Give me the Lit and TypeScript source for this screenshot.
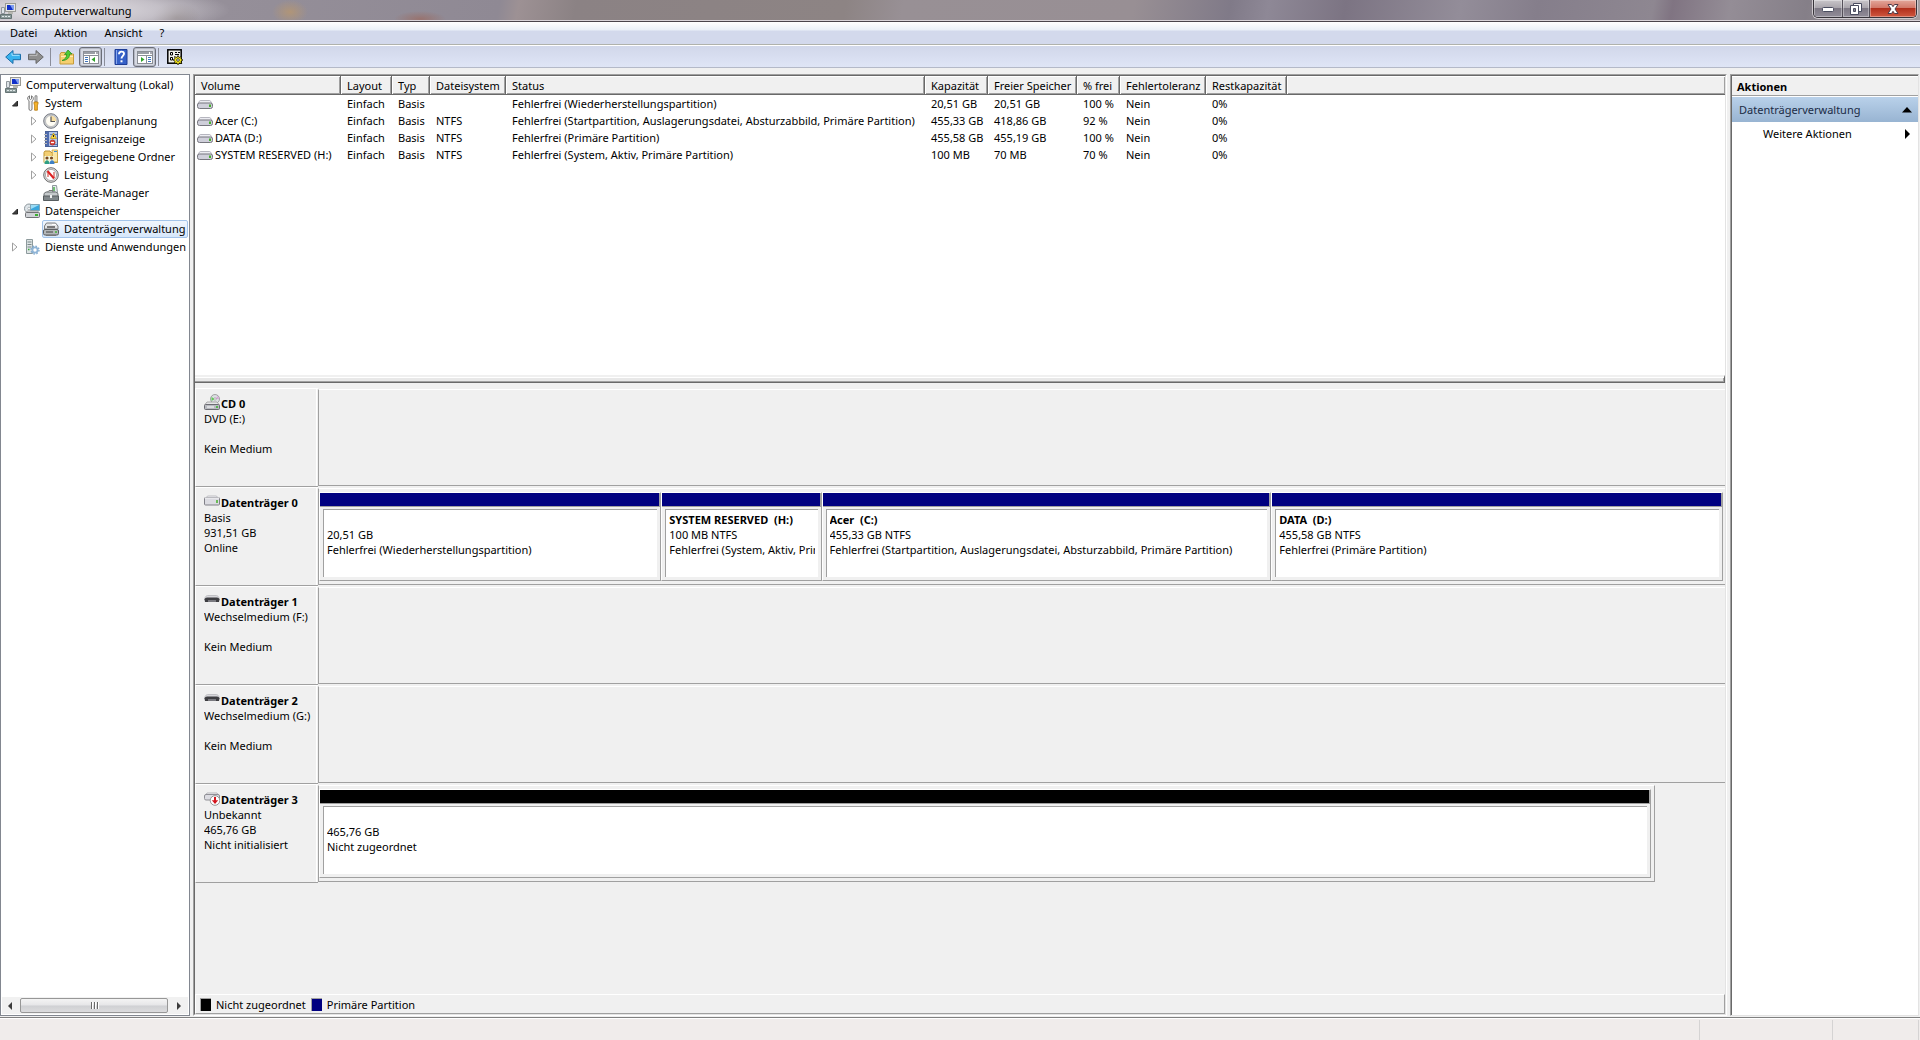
import { LitElement, html, css, svg, nothing } from "lit";
import type { TemplateResult } from "lit";
import { customElement } from "lit/decorators.js";
import { classMap } from "lit/directives/class-map.js";
import { styleMap } from "lit/directives/style-map.js";

const art: Record<string, TemplateResult> = {
  computer: svg`
    <rect x="5.500" y=".5" width="10" height="8" fill="#e8e8e4" stroke="#9a9a94"/>
    <rect x="7" y="2" width="7" height="5" fill="#1230c8"/><path d="M10 2h4v5h-1z" fill="#7f9cf0"/>
    <path d="M8 9h5v2H8z" fill="#b8b8b2"/><path d="M1.500 4.500h3v6h-3z" fill="#dfe4e8" stroke="#90979c"/>
    <path d="M.5 11.500h11v4H.5z" fill="#8c9a9a" stroke="#657474"/><path d="M2 13.500h2m1 0h2m1 0h2" stroke="#dfe8e8"/>`,
  system: svg`
    <path d="M5.500.8C3.500 1.500 3 4 4.500 5.300L5 6v8c0 2 3 2 3 0V6c2-1.300 1.800-4-.5-5.200v3L6.500 4.500l-1-.7z" fill="#f4f4f4" stroke="#777"/>
    <path d="M11 .8h2v6h-2z" fill="#ddd" stroke="#777" stroke-width=".8"/><path d="M10 7h4v2l-.6 1v5.200h-2.800V10L10 9z" fill="#f6b42c" stroke="#b87a10" stroke-width=".8"/>`,
  clock: svg`
    <circle cx="8" cy="8" r="7.300" fill="#c9ccd1" stroke="#777b82"/><circle cx="8" cy="8" r="5.500" fill="#fffdf4" stroke="#a8a8a8" stroke-width=".6"/>
    <path d="M8 8V2.700A5.300 5.300 0 0 1 13.300 8z" fill="#f6dda0"/><path d="M8 3.500V8.500h4" fill="none" stroke="#555" stroke-width="1.200"/>`,
  events: svg`
    <rect x="2.500" y=".5" width="12" height="15" fill="#b4c6e8" stroke="#4a6298"/><path d="M3 1h3v14H3z" fill="#4f6cae"/>
    <path d="M1 3.500h3M1 6.500h3M1 9.500h3M1 12.500h3" stroke="#bbb"/><path d="M7 3.500h7M7 13.500h7" stroke="#5b7ab8"/>
    <path d="M10.500 2l3 5.500h-6z" fill="#ffd83a" stroke="#b08a00" stroke-width=".6"/><path d="M10.500 4v2" stroke="#222"/>
    <circle cx="9.500" cy="11.500" r="2.500" fill="#e0564e" stroke="#b02018" stroke-width=".8"/><path d="M8 11.500h3" stroke="#fff"/>`,
  shared: svg`
    <path d="M1 3.500L2 2h5l1 1.500h6.500v10H1z" fill="#f3cf72" stroke="#bd9432"/><path d="M9 1h5.500v12H10z" fill="#fbe6a5" stroke="#c79f3e" stroke-width=".8"/>
    <path d="M11 2.500h3" stroke="#3b8fd8"/><path d="M1.500 7h9v7h-9z" fill="#f4f8dc"/>
    <circle cx="4" cy="9" r="1.600" fill="#7a4a22"/><circle cx="8.500" cy="9" r="1.600" fill="#7a4a22"/>
    <path d="M1.500 15c0-5 5-5 5 0z" fill="#2f9f83"/><path d="M6.500 15c0-5 5-5 5 0z" fill="#3e7fc4"/>`,
  gauge: svg`
    <circle cx="8" cy="8" r="7.300" fill="#e0e0e0" stroke="#6c6c6c"/><circle cx="8" cy="8" r="5.600" fill="#fff" stroke="#999" stroke-width=".8"/>
    <path d="M5 10V5l6 6V5" fill="none" stroke="#c8322a" stroke-width="1"/><path d="M4.500 4l6.500 7.500" stroke="#d22" stroke-width="2"/>`,
  devices: svg`
    <path d="M9.500.5h4l1 7h-5z" fill="#e6ecee" stroke="#8f989b"/><path d="M11 2v4" stroke="#49b04a" stroke-width="1.500"/>
    <path d="M4 7.500l2-2h4l2 2" fill="none" stroke="#777"/><path d="M1 8.500L3 7h10l2 1.500v3H1z" fill="#c5c9cb" stroke="#6d7275"/>
    <path d="M.5 11h15v4.500H.5z" fill="#80878a" stroke="#565c5e"/><path d="M7 10h2v3H7z" fill="#f0f0f0"/>`,
  storage: svg`
    <circle cx="5" cy="5.500" r="4.500" fill="#dfe6ea" stroke="#8d979d"/><circle cx="5" cy="5.500" r="1.300" fill="#fff" stroke="#8d979d" stroke-width=".6"/>
    <path d="M6.500 1.500h9v6h-9z" fill="#3aa6dc" stroke="#7fa6b8"/><path d="M7 2h8L7 6z" fill="#9adcf6"/>
    <path d="M2 9.500L3.500 8h10L15 9.500" fill="#e8e8ea" stroke="#999"/><rect x="1.500" y="9.500" width="14" height="5" rx="1" fill="#d0d2d6" stroke="#707276"/><path d="M11 12h3" stroke="#3bb030" stroke-width="2"/>`,
  diskmgmt: svg`
    <path d="M1.500 5l2-3h9l2.500 3v3h-13.500z" fill="#e2e4e6" stroke="#7c7e80"/><path d="M4 6h8" stroke="#555" stroke-width="1.500"/><path d="M9 3.500h4" stroke="#fff"/>
    <rect x=".5" y="8.500" width="15" height="5.500" rx="1.500" fill="#b4b7b9" stroke="#5c5f62"/><path d="M3 11h7" stroke="#444"/><path d="M12 11h2" stroke="#3fb33a" stroke-width="1.600"/><path d="M3 14.500h10" stroke="#777"/>`,
  services: svg`
    <path d="M2.500.5h6v14h-6z" fill="#dde3e4" stroke="#8d9a9c"/><path d="M3.500 3h4m-4 2.500h4m-4 2.500h4" stroke="#7b898b"/><path d="M4 10.500h1.500" stroke="#39a838" stroke-width="1.500"/>
    <circle cx="11" cy="11" r="2.600" fill="#fff" stroke="#8fb4d6" stroke-width="1.800"/><circle cx="11" cy="11" r="4" fill="none" stroke="#7fa9cf" stroke-width="1.300" stroke-dasharray="1.600 1.540"/>`,
  back: svg`<path d="M8 1.500v3.800h7.500v5.400H8v3.800L.7 8z" fill="#38b2ee" stroke="#1b6da8"/><path d="M7 4v2.300h7.500" fill="none" stroke="#a6e4ff"/>`,
  forward: svg`<path d="M8 1.500v3.800H.5v5.400H8v3.800L15.300 8z" fill="#8f8f8f" stroke="#686868"/><path d="M1.500 6.300H9V4" fill="none" stroke="#c2c2c2"/>`,
  folderup: svg`
    <path d="M1 5.500l1-2h4l1 1.500h7.500v10H1z" fill="#f5cf70" stroke="#c59b3c"/><path d="M2 7.500h12" stroke="#fdebb4"/>
    <path d="M3 11.500c3-1 4.500-3 4.700-6H5.500L9 1l4 4h-2.300c0 4-3 6.500-7.700 6.500z" fill="#4ecb35" stroke="#238a1a" stroke-width=".7"/>`,
  paneleft: svg`
    <rect x=".5" y="2.500" width="15" height="12" fill="#fff" stroke="#8b8f96"/><path d="M1 4h11" stroke="#9a9ea6" stroke-width="2"/><path d="M13 4h2" stroke="#556"/><path d="M1 6.500h14M6.500 7v7" stroke="#8b8f96"/>
    <path d="M2 8.500h3m-3 2h3m-3 2h3" stroke="#3d74bd"/><path d="M12 8v5l-3.500-2.500z" fill="#2fa32a"/>`,
  paneright: svg`
    <rect x=".5" y="2.500" width="15" height="12" fill="#fff" stroke="#8b8f96"/><path d="M1 4h11" stroke="#9a9ea6" stroke-width="2"/><path d="M13 4h2" stroke="#556"/><path d="M1 6.500h14M9.500 7v7" stroke="#8b8f96"/>
    <path d="M11 8.500h3m-3 2h3m-3 2h3" stroke="#3d74bd"/><path d="M4 8v5l3.500-2.500z" fill="#2fa32a"/>`,
  help: svg`
    <path d="M2 .5h12v15H2z" fill="#3560c8" stroke="#1e3d96"/><path d="M3.500 1v14" stroke="#88a6ec"/>
    <path d="M6 5.200c0-3.400 5-3.400 5-.4 0 2-2.500 2.200-2.500 4.700" fill="none" stroke="#fff" stroke-width="1.900"/><path d="M7.500 11.300h2v2h-2z" fill="#fff"/>`,
  settings: svg`
    <rect x=".8" y=".8" width="13.400" height="13.400" fill="#f0f0ec" stroke="#000" stroke-width="1.500"/>
    <path d="M3.500 3.500h2v2.500h-2zM3.500 8.500h2v2.500h-2z" fill="#fff" stroke="#000"/><path d="M8 3.500h2m1 0h2M8 5.500h4" stroke="#000"/>
    <path d="M11 6.500l1 2 2.500-1-.5 2.300 2 1.200-2 1.200.8 2.300-2.500-.6-1.300 2-1.300-2-2.500.6.800-2.300-2-1.200 2-1.200L7.500 7.500l2.500 1z" fill="#f2e41c" stroke="#000" stroke-width=".7"/><circle cx="11" cy="11" r="1.300" fill="#fff" stroke="#000" stroke-width=".7"/>`,
  volume: svg`
    <path d="M.6 8.500L2.500 5c.2-.4.5-.5 1-.5h9c.5 0 .8.100 1 .5l1.900 3.500z" fill="#ececf2" stroke="#a6a6b0" stroke-width=".8"/>
    <rect x=".5" y="7" width="15" height="5.500" rx="2" fill="#cfcfda" stroke="#77777f"/><path d="M12 8.500h2v2.500h-2z" fill="#46b02a"/>`,
  disk: svg`
    <path d="M2 5l1.500-2h9L14 5" fill="#f4f4f6" stroke="#b0b0b6" stroke-width=".8"/>
    <rect x=".5" y="4.500" width="15" height="7.500" rx="1" fill="#dcdce2" stroke="#808088"/><path d="M1 5h14" stroke="#f4f4f6"/><path d="M13 7v3" stroke="#46b02a" stroke-width="1.500"/>`,
  cdrom: svg`
    <circle cx="11" cy="5" r="4.500" fill="#dcdfe2" stroke="#909090" stroke-width=".8"/><path d="M11 5L7.500 3v4z" fill="#5fcf55"/><path d="M11 5l3-3 1 3z" fill="#d8a8d8"/><circle cx="11" cy="5" r="1.200" fill="#fff" stroke="#888" stroke-width=".6"/>
    <path d="M1 10.500L3 8h10l2 2.500" fill="#e6e6e8" stroke="#999" stroke-width=".8"/><rect x=".5" y="10.500" width="15" height="5" rx="1" fill="#b8bac0" stroke="#6c6c72"/><path d="M3 13h7" stroke="#fff"/><path d="M12 13h2" stroke="#35b02a" stroke-width="1.600"/>`,
  removable: svg`
    <path d="M.5 7.500C1 4 3 3.500 4 3.500h8c1 0 3 .5 3.500 4z" fill="#d8d8dc" stroke="#b0b0b4" stroke-width=".7"/>
    <path d="M.5 7.500C1 5.500 3 5.500 4 5.500h8c1 0 3 0 3.500 2L15 10H1z" fill="#3e3e42"/><path d="M4 9h8" stroke="#8a8a90" stroke-width="1.600"/>`,
  offline: svg`
    <path d="M1 6l2-3h10l2 3" fill="#f4f4f6" stroke="#a6a6ac" stroke-width=".8"/><rect x=".5" y="4.500" width="15" height="5.500" rx="1.500" fill="#dcdce2" stroke="#909096"/>
    <circle cx="11" cy="10.500" r="4.800" fill="#fff" stroke="#8a8a8a" stroke-width=".9"/><path d="M11 7V12" stroke="#d4141c" stroke-width="2"/><path d="M7.800 10.200h6.400L11 14z" fill="#d4141c"/>`,
};

const icon = (name: string) =>
  html`<svg class="icon" viewBox="0 0 16 16" width="16" height="16" aria-hidden="true">${art[name]}</svg>`;

const base = css`
  * { box-sizing: border-box; }
  button {
    font: inherit; color: inherit; background: none; border: 0; margin: 0; padding: 0;
    text-align: left; cursor: default;
  }
  .icon { display: block; flex: none; }
`;

@customElement("window-frame-bars")
class WindowFrameBars extends LitElement {
  static styles = [base, css`
    :host { display: block; }
    .title {
      display: flex; height: 22px; border-bottom: 1px solid #4a454c;
      background:
        linear-gradient(to bottom, transparent 20px, #d8d3d8 20px),
        radial-gradient(ellipse 170px 26px at 60px 10px, rgba(240,238,242,.95), rgba(225,222,228,.6) 60%, transparent),
        radial-gradient(ellipse 24px 14px at 176px 17px, #7d7476, transparent),
        radial-gradient(ellipse 18px 12px at 290px 12px, #b09578, transparent),
        radial-gradient(ellipse 26px 8px at 420px 19px, #98736f, transparent),
        linear-gradient(100deg, #9a949d 0, #8f8994 26%, #9d9194 27%, #8b8284 30%, #8d8484 44%, #989095 47%, #988f94 59%, #807a88 64%, #8e8896 66%, #7c7483 70%, #938d99 76%, #857e8b 80%, #8e8791 86%, #807482 87%, #948d96 90%, #857f88 94%, #a59fa2 100%);
    }
    .caption { display: flex; align-items: center; gap: 5px; height: 20px; flex: 1; padding-top: 1px; }
    h1 { font-size: inherit; font-weight: 400; margin: 0; }
    .controls {
      display: flex; height: 18px; margin-right: 3px; border: 1px solid #37343a; border-top: 0;
      border-radius: 0 0 5px 5px; box-shadow: 0 0 0 1px #cfcacf; overflow: hidden;
    }
    .ctl {
      width: 27px; display: grid; place-items: center; border-right: 1px solid #55505a;
      background: linear-gradient(#c9c6ca 0, #aaa6ad 45%, #7d7884 50%, #918c98 100%);
      box-shadow: inset 0 0 0 1px rgba(255,255,255,.35);
    }
    .ctl.first { width: 29px; }
    .ctl.close { width: 46px; border-right: 0; background: linear-gradient(#e3a79b 0, #d2796a 45%, #b12f1c 50%, #d0573f 100%); }
    .menu {
      display: flex; gap: 1px; height: 23px; padding: 0 2px 1px; border-bottom: 1px solid #b0b2ac;
      background: linear-gradient(#fff 0, #eaf0f8 8px, #d3d9ec 9px, #d3d9ec 100%);
    }
    .menu button { padding: 0 8px; }
    .tools {
      display: flex; align-items: center; height: 23px; padding: 0 1px; border-top: 1px solid #fff;
      border-bottom: 1px solid #b4b9c8; background: linear-gradient(#d1d7ea, #dfe5f6);
    }
    .tool { width: 23px; height: 20px; display: grid; place-items: center; }
    .tool.on { margin-left: 1px; border: 1px solid #6b6e78; border-radius: 3px; background: #d6d9e2; box-shadow: inset 0 0 0 1px #b4b8c4; }
    .sep { width: 1px; height: 18px; margin: 0 4px 0 3px; background: #8b8e9a; }
    .on + .sep { margin-left: 2px; }
  `];

  render() {
    return html`
      <header class="title">
        <div class="caption">${icon("computer")}<h1>Computerverwaltung</h1></div>
        <div class="controls">
          <button class="ctl first" aria-label="Minimieren">
            <svg width="14" height="14" viewBox="0 0 14 14"><rect x="1.500" y="5.500" width="11" height="4" rx="1" fill="#fff" stroke="#4a4d60"/></svg>
          </button>
          <button class="ctl" aria-label="Verkleinern">
            <svg width="14" height="14" viewBox="0 0 14 14"><path d="M4.500 1.500h8v8h-8z" fill="#fff" stroke="#4a4d60"/><path d="M1.500 3.500h8v9h-8z" fill="#fff" stroke="#4a4d60"/><path d="M4.500 6.500h2v3h-2z" fill="#8a8692" stroke="#4a4d60"/></svg>
          </button>
          <button class="ctl close" aria-label="Schließen">
            <svg width="14" height="14" viewBox="0 0 14 14"><path d="M2 2.500h3.500L7 4.700l1.500-2.200H12L9 7l3 4.500H8.500L7 9.300l-1.500 2.200H2L5 7z" fill="#fff" stroke="#4e3a48"/></svg>
          </button>
        </div>
      </header>
      <nav class="menu">${["Datei", "Aktion", "Ansicht", "?"].map((m) => html`<button>${m}</button>`)}</nav>
      <div class="tools" role="toolbar">
        <button class="tool" aria-label="Zurück">${icon("back")}</button>
        <button class="tool" aria-label="Vorwärts">${icon("forward")}</button>
        <span class="sep"></span>
        <button class="tool" aria-label="Eine Ebene nach oben">${icon("folderup")}</button>
        <button class="tool on" aria-label="Konsolenstruktur">${icon("paneleft")}</button>
        <span class="sep"></span>
        <button class="tool" aria-label="Hilfe">${icon("help")}</button>
        <button class="tool on" aria-label="Aktionsbereich">${icon("paneright")}</button>
        <span class="sep"></span>
        <button class="tool" aria-label="Einstellungen">${icon("settings")}</button>
      </div>`;
  }
}

interface Node { label: string; icon: string; level: number; state?: "open" | "closed"; selected?: boolean; }

const nodes: Node[] = [
  { label: "Computerverwaltung (Lokal)", icon: "computer", level: 0 },
  { label: "System", icon: "system", level: 1, state: "open" },
  { label: "Aufgabenplanung", icon: "clock", level: 2, state: "closed" },
  { label: "Ereignisanzeige", icon: "events", level: 2, state: "closed" },
  { label: "Freigegebene Ordner", icon: "shared", level: 2, state: "closed" },
  { label: "Leistung", icon: "gauge", level: 2, state: "closed" },
  { label: "Geräte-Manager", icon: "devices", level: 2 },
  { label: "Datenspeicher", icon: "storage", level: 1, state: "open" },
  { label: "Datenträgerverwaltung", icon: "diskmgmt", level: 2, selected: true },
  { label: "Dienste und Anwendungen", icon: "services", level: 1, state: "closed" },
];

@customElement("console-tree")
class ConsoleTree extends LitElement {
  static styles = [base, css`
    :host { display: flex; flex-direction: column; background: #fff; border: 1px solid #828790; overflow: hidden; }
    .tree { flex: 1; margin: 0; padding: 1px 1px 0 0; list-style: none; }
    .node { display: flex; align-items: center; height: 18px; white-space: nowrap; }
    .twist { width: 17px; height: 16px; flex: none; display: grid; place-items: center; }
    .l0 { padding-left: 3px; }
    .l1 { padding-left: 5px; }
    .l2 { padding-left: 24px; }
    .item { display: flex; align-items: center; gap: 5px; height: 18px; padding: 0 0 0 1px; flex: 1; min-width: 0; overflow: hidden; }
    .sel .item { border: 1px solid #a3c4ea; border-radius: 2px; padding-left: 0; background: linear-gradient(#f0f6fd, #d6e7fb); }
    .scroll { display: flex; align-items: center; height: 17px; background: #f1f1f1; margin: 0 1px 1px; }
    .arrow { width: 18px; height: 16px; display: grid; place-items: center; }
    .arrow.left { padding-right: 3px; }
    .thumb {
      height: 15px; width: 148px; display: flex; justify-content: center; align-items: center; gap: 2px;
      border: 1px solid #979797; border-radius: 2px; background: linear-gradient(#f4f4f4 0, #e6e6e8 48%, #cfd0d3 52%, #dcdcde);
    }
    .grip { width: 1px; height: 7px; background: #6a6a6a; box-shadow: 1px 0 #fff; }
    .track { flex: 1; }
  `];

  render() {
    return html`
      <ul class="tree" role="tree">
        ${nodes.map((n) => html`
          <li class=${classMap({ node: true, [`l${n.level}`]: true, sel: !!n.selected })} role="treeitem">
            ${n.level ? html`<span class="twist">${n.state === "open"
              ? html`<svg width="8" height="8" viewBox="0 0 8 8"><path d="M6.500 2v5h-5z" fill="#404040" stroke="#262626"/></svg>`
              : n.state === "closed"
                ? html`<svg width="8" height="10" viewBox="0 0 8 10"><path d="M1.500 1l4.500 4-4.500 4z" fill="#fff" stroke="#a0a0a0"/></svg>`
                : nothing}</span>` : nothing}
            <button class="item">${icon(n.icon)}<span>${n.label}</span></button>
          </li>`)}
      </ul>
      <div class="scroll">
        <button class="arrow left" aria-label="Nach links"><svg width="5" height="8" viewBox="0 0 5 8"><path d="M5 0v8L1 4z" fill="#3c3c3c"/></svg></button>
        <button class="thumb" aria-label="Bildlauf"><span class="grip"></span><span class="grip"></span><span class="grip"></span></button>
        <span class="track"></span>
        <button class="arrow" aria-label="Nach rechts"><svg width="5" height="8" viewBox="0 0 5 8"><path d="M0 0v8l4-4z" fill="#3c3c3c"/></svg></button>
      </div>`;
  }
}

const columns = ["Volume", "Layout", "Typ", "Dateisystem", "Status", "Kapazität", "Freier Speicher", "% frei", "Fehlertoleranz", "Restkapazität"];
const volumes = [
  ["", "Einfach", "Basis", "", "Fehlerfrei (Wiederherstellungspartition)", "20,51 GB", "20,51 GB", "100 %", "Nein", "0%"],
  ["Acer (C:)", "Einfach", "Basis", "NTFS", "Fehlerfrei (Startpartition, Auslagerungsdatei, Absturzabbild, Primäre Partition)", "455,33 GB", "418,86 GB", "92 %", "Nein", "0%"],
  ["DATA (D:)", "Einfach", "Basis", "NTFS", "Fehlerfrei (Primäre Partition)", "455,58 GB", "455,19 GB", "100 %", "Nein", "0%"],
  ["SYSTEM RESERVED (H:)", "Einfach", "Basis", "NTFS", "Fehlerfrei (System, Aktiv, Primäre Partition)", "100 MB", "70 MB", "70 %", "Nein", "0%"],
];

@customElement("volume-list")
class VolumeList extends LitElement {
  static styles = [base, css`
    :host { display: block; background: #fff; overflow: hidden; }
    table { width: 100%; table-layout: fixed; border-collapse: separate; border-spacing: 0; }
    th, td { padding: 0 0 0 6px; text-align: left; font-weight: 400; white-space: nowrap; line-height: 16px; }
    th {
      height: 19px; padding-top: 2px; background: #f0f0f0; border-bottom: 1px solid #696969; border-right: 1px solid #696969;
      box-shadow: inset 1px 1px #fff, inset -1px -1px #a0a0a0;
    }
    th:last-child { border-right: 0; }
    td { height: 17px; }
    .c0 { width: 146px; } .c1 { width: 51px; } .c2 { width: 38px; } .c3 { width: 76px; } .c4 { width: 419px; }
    .c5 { width: 63px; } .c6 { width: 89px; } .c7 { width: 43px; } .c8 { width: 86px; } .c9 { width: 81px; }
    .name { display: flex; align-items: center; gap: 2px; }
    .vol { padding-left: 2px; }
  `];

  render() {
    return html`
      <table>
        <thead><tr>${columns.map((c, i) => html`<th class="c${i}" scope="col">${c}</th>`)}<th></th></tr></thead>
        <tbody>
          ${volumes.map((v) => html`<tr>${v.map((cell, i) => i === 0
            ? html`<td class="vol"><span class="name">${icon("volume")}${cell}</span></td>`
            : html`<td>${cell}</td>`)}<td></td></tr>`)}
        </tbody>
      </table>`;
  }
}

interface Part { share: number; name?: string; size: string; status: string; free?: boolean; }
interface Disk { name: string; icon: string; lines: string[]; parts: Part[]; width?: number; }

const disks: Disk[] = [
  { name: "CD 0", icon: "cdrom", lines: ["DVD (E:)", "", "Kein Medium"], parts: [] },
  {
    name: "Datenträger 0", icon: "disk", lines: ["Basis", "931,51 GB", "Online"],
    parts: [
      { share: 342, size: "20,51 GB", status: "Fehlerfrei (Wiederherstellungspartition)" },
      { share: 159, name: "SYSTEM RESERVED  (H:)", size: "100 MB NTFS", status: "Fehlerfrei (System, Aktiv, Primäre Partition)" },
      { share: 450, name: "Acer  (C:)", size: "455,33 GB NTFS", status: "Fehlerfrei (Startpartition, Auslagerungsdatei, Absturzabbild, Primäre Partition)" },
      { share: 452, name: "DATA  (D:)", size: "455,58 GB NTFS", status: "Fehlerfrei (Primäre Partition)" },
    ],
  },
  { name: "Datenträger 1", icon: "removable", lines: ["Wechselmedium (F:)", "", "Kein Medium"], parts: [] },
  { name: "Datenträger 2", icon: "removable", lines: ["Wechselmedium (G:)", "", "Kein Medium"], parts: [] },
  {
    name: "Datenträger 3", icon: "offline", lines: ["Unbekannt", "465,76 GB", "Nicht initialisiert"], width: 95,
    parts: [{ share: 1, size: "465,76 GB", status: "Nicht zugeordnet", free: true }],
  },
];

@customElement("disk-map")
class DiskMap extends LitElement {
  static styles = [base, css`
    :host { display: flex; flex-direction: column; background: #f0f0f0; line-height: 15px; }
    .disks { flex: 1; }
    .disk { display: flex; height: 99px; }
    .info {
      width: 123px; flex: none; padding: 7px 7px 0 8px;
      border-top: 1px solid #fff; border-left: 1px solid #fff; border-bottom: 1px solid #a0a0a0;
      box-shadow: inset -1px 0 #f0f0f0, inset -2px 0 #fff;
    }
    .head { display: flex; align-items: center; gap: 1px; height: 15px; font-weight: 700; white-space: nowrap; }
    .head .icon { margin-top: -4px; }
    .line { height: 15px; overflow: hidden; white-space: nowrap; }
    .area {
      display: flex; flex: 1; min-width: 0; margin: 1px 0; padding: 3px 2px 3px 0;
      border-top: 1px solid #fff; border-bottom: 1px solid #a0a0a0; border-left: 1px solid #a0a0a0;
    }
    .partial { flex: none; padding-right: 3px; border-right: 1px solid #a0a0a0; }
    .part {
      flex-basis: 0; min-width: 0; display: flex; flex-direction: column;
      border: 1px solid #a0a0a0; border-top-color: #fff; border-left-color: #fff;
    }
    .bar { height: 14px; background: #000080; border-bottom: 1px solid #a0a0a0; border-right: 1px solid #a0a0a0; flex: none; }
    .bar.free { background: #000; }
    .body {
      flex: 1; margin: 2px 3px 3px 3px; padding: 2px 3px; background: #fff;
      border-top: 1px solid #a0a0a0; border-left: 1px solid #a0a0a0; min-width: 0;
    }
    .name { font-weight: 700; white-space: pre; }
    .legend {
      display: flex; align-items: center; height: 20px; padding-left: 4px; gap: 5px;
      border: 1px solid #a0a0a0; border-top-color: #fff; border-left-color: #fff;
    }
    .swatch { width: 11px; height: 13px; border-top: 1px solid #a0a0a0; border-left: 1px solid #a0a0a0; background: #000; }
    .swatch.primary { background: #000080; }
  `];

  render() {
    return html`
      <div class="disks">
        ${disks.map((d) => html`
          <section class="disk">
            <div class="info">
              <div class="head">${icon(d.icon)}<span>${d.name}</span></div>
              ${d.lines.map((l) => html`<div class="line">${l}</div>`)}
            </div>
            <div class=${classMap({ area: true, partial: !!d.width })} style=${d.width ? styleMap({ width: `calc((100% - 123px) * ${d.width / 100})` }) : nothing}>
              ${d.parts.map((p) => html`
                <div class="part" style=${styleMap({ flexGrow: String(p.share) })}>
                  <div class=${classMap({ bar: true, free: !!p.free })}></div>
                  <div class="body">
                    <div class="line name">${p.name ?? ""}</div>
                    <div class="line">${p.size}</div>
                    <div class="line">${p.status}</div>
                  </div>
                </div>`)}
            </div>
          </section>`)}
      </div>
      <footer class="legend">
        <span class="swatch"></span><span>Nicht zugeordnet</span>
        <span class="swatch primary"></span><span>Primäre Partition</span>
      </footer>`;
  }
}

@customElement("actions-pane")
class ActionsPane extends LitElement {
  static styles = [base, css`
    :host { display: flex; flex-direction: column; background: #fff; border: 1px solid #e3e3e3; border-top-color: #a0a0a0; border-left-color: #a0a0a0; }
    .inner { flex: 1; border-top: 1px solid #696969; border-left: 1px solid #696969; }
    h2 { font-size: inherit; font-weight: 700; line-height: 18px; margin: 0; height: 20px; padding: 1px 5px 0; background: #f0f0f0; border-top: 1px solid #fff; border-bottom: 1px solid #a0a0a0; }
    .group, .action { display: flex; justify-content: space-between; align-items: center; width: 100%; padding: 0 6px 0 7px; height: 25px; }
    .group { margin-top: 1px; background: linear-gradient(#b9d1ea, #98b4d2); color: #1b2b45; }
    .action { padding: 0 8px 0 31px; height: 24px; }
  `];

  render() {
    return html`
      <div class="inner">
        <h2>Aktionen</h2>
        <button class="group">Datenträgerverwaltung<svg width="10" height="6" viewBox="0 0 10 6"><path d="M5 0l5 5.500H0z" fill="#000"/></svg></button>
        <button class="action">Weitere Aktionen<svg width="5" height="10" viewBox="0 0 5 10"><path d="M0 0l5 5-5 5z" fill="#000"/></svg></button>
      </div>`;
  }
}

@customElement("app-root")
class AppRoot extends LitElement {
  static styles = [base, css`
    :host {
      display: flex; flex-direction: column; min-height: 100vh; background: #f0f0f0; color: #000;
      font: 11px/16px "Noto Sans", "Open Sans", sans-serif;
    }
    .main { flex: 1; display: grid; grid-template-columns: 190px minmax(0, 1fr) 190px; gap: 3px; padding: 6px 0 0; }
    .center {
      display: flex; flex-direction: column; border: 1px solid #fff; border-top-color: #a0a0a0; border-left-color: #a0a0a0;
    }
    .inner { flex: 1; display: flex; flex-direction: column; border: 1px solid #e3e3e3; border-top-color: #696969; border-left-color: #696969; }
    .list { height: 299px; }
    .split { height: 8px; margin-bottom: 5px; background: #e8e8e8; border-top: 2px solid #f0f0f0; border-bottom: 1px solid #696969; border-right: 1px solid #696969; box-shadow: inset 0 1px #fff, inset -1px -1px #a0a0a0; }
    .map { flex: 1; }
    .right { margin-right: 1px; }
    .status { display: flex; height: 23px; margin-top: 1px; border-top: 1px solid #808080; box-shadow: inset 0 1px #fff; background: #f0eceb; justify-content: flex-end; padding-top: 2px; }
    .cell { width: 133px; border-left: 1px solid #d5d3d3; }
    .cell.end { width: 87px; border-right: 1px solid #d5d3d3; margin-right: 1px; }
  `];

  render() {
    return html`
      <window-frame-bars></window-frame-bars>
      <main class="main">
        <console-tree></console-tree>
        <div class="center">
          <div class="inner">
            <volume-list class="list"></volume-list>
            <div class="split"></div>
            <disk-map class="map"></disk-map>
          </div>
        </div>
        <actions-pane class="right"></actions-pane>
      </main>
      <footer class="status"><span class="cell"></span><span class="cell end"></span></footer>`;
  }
}
